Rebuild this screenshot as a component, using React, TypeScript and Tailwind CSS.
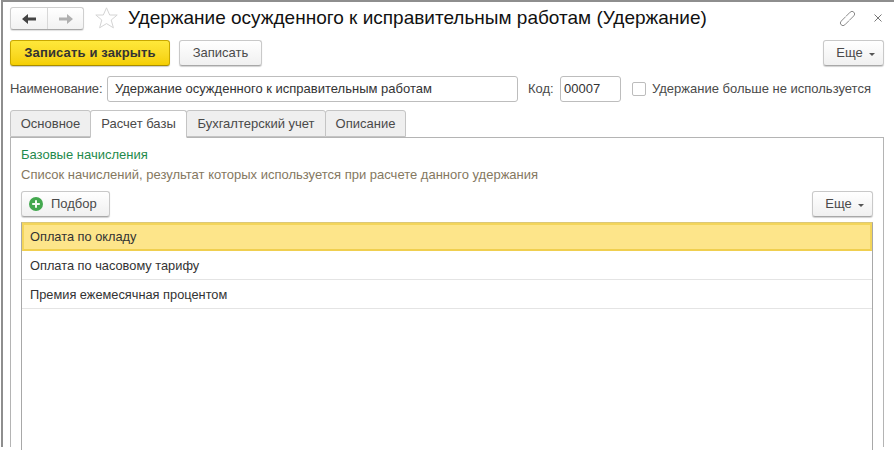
import React from "react";

const font = { fontFamily: '"Liberation Sans", Arial, sans-serif' };

function Btn({ children, className = "" }: { children: React.ReactNode; className?: string }) {
  return (
    <div
      className={`flex items-center justify-center h-[26px] rounded-[3px] border border-[#c9c9c9] border-b-[#a8a8a8] bg-gradient-to-b from-[#ffffff] to-[#f0f0f0] shadow-[0_1px_1px_rgba(0,0,0,0.18)] text-[13px] text-[#4a4a4a] ${className}`}
    >
      {children}
    </div>
  );
}

function More({ className = "" }: { className?: string }) {
  return (
    <Btn className={`w-[61px] gap-[6px] pl-[4px] ${className}`}>
      <span>Еще</span>
      <svg width="6" height="3" viewBox="0 0 6 3" className="mt-[2px]">
        <path d="M0 0H6L3 3Z" fill="#555" />
      </svg>
    </Btn>
  );
}

function Tab({ label, active, w }: { label: string; active?: boolean; w: string }) {
  return (
    <div
      className={`${w} flex items-center justify-center rounded-t-[3px] border border-[#c4c4c4] text-[13px] text-[#4a4a4a] -mr-px ${
        active ? "h-[28px] bg-white border-b-white relative z-10 -mb-px" : "h-[27px] bg-[#efefef]"
      }`}
    >
      {label}
    </div>
  );
}

export default function App() {
  return (
    <div className="w-[894px] h-[450px] bg-white overflow-hidden" style={font}>
      <div className="ml-px h-[447px] border-l-2 border-t-2 border-[#8e8e8e] pl-[7px] pt-[4px] pr-[10px]">
        {/* title row */}
        <div className="flex items-center h-[24px]">
          <div className="flex w-[74px] h-[23px] self-end rounded-[3px] border border-[#cfcfcf] border-b-[#a8a8a8] bg-gradient-to-b from-white to-[#f2f2f2] shadow-[0_1px_1px_rgba(0,0,0,0.12)]">
            <div className="w-[37px] flex items-center justify-center border-r border-[#d8d8d8]">
              <svg width="14" height="10" viewBox="0 0 14 10">
                <path d="M0 5L6 0V3.5H14V6.5H6V10Z" fill="#444" />
              </svg>
            </div>
            <div className="flex-1 flex items-center justify-center">
              <svg width="14" height="10" viewBox="0 0 14 10">
                <path d="M14 5L8 0V3.5H0V6.5H8V10Z" fill="#b0b0b0" />
              </svg>
            </div>
          </div>
          <svg width="23" height="22" viewBox="0 0 23 22" className="ml-[11px] mr-[1px]">
            <path
              d="M11.5 0.8L14.7 8H22.2L16.2 13L18.4 20.8L11.5 16.6L4.6 20.8L6.8 13L0.8 8H8.3Z"
              fill="none"
              stroke="#d4d4d4"
              strokeWidth="1"
            />
          </svg>
          <div className="ml-[9px] text-[19px] leading-[24px] text-[#111] whitespace-nowrap">
            Удержание осужденного к исправительным работам (Удержание)
          </div>
          <div className="ml-auto flex items-center">
            <svg width="17" height="17" viewBox="0 0 17 17" fill="none" stroke="#8a8a8a" strokeWidth="1" strokeLinecap="round">
              <path d="M10.84 9.84L14.84 5.84A2.6 2.6 0 0 0 11.16 2.16L7.16 6.16" />
              <path d="M6.16 7.16L2.16 11.16A2.6 2.6 0 0 0 5.84 14.84L9.84 10.84" />
            </svg>
            <svg width="8" height="8" viewBox="0 0 8 8" className="ml-[18px] mr-[2px]">
              <path d="M0.5 0.5L7.5 7.5M7.5 0.5L0.5 7.5" stroke="#777" strokeWidth="1" />
            </svg>
          </div>
        </div>

        {/* command bar */}
        <div className="flex items-center mt-[10px]">
          <div className="flex items-center justify-center w-[160px] h-[26px] rounded-[3px] border border-[#c9a800] border-b-[#a88c00] bg-gradient-to-b from-[#ffe83a] to-[#f5cf00] shadow-[0_1px_1px_rgba(0,0,0,0.2)] text-[13px] font-bold tracking-[0.15px] text-[#333]">
            Записать и закрыть
          </div>
          <Btn className="w-[83px] ml-[9px]">Записать</Btn>
          <More className="ml-auto" />
        </div>

        {/* name row */}
        <div className="flex items-center mt-[10px] h-[26px] text-[13px] text-[#4a4a4a]">
          <span className="whitespace-nowrap w-[97px] tracking-[-0.1px]">Наименование:</span>
          <div className="w-[411px] h-[26px] rounded-[3px] border border-[#bdbdbd] flex items-center pl-[7px] text-[#333] whitespace-nowrap">
            Удержание осужденного к исправительным работам
          </div>
          <span className="ml-[10px] w-[32px]">Код:</span>
          <div className="w-[61px] h-[26px] rounded-[3px] border border-[#bdbdbd] flex items-center pl-[3px] text-[#333]">
            00007
          </div>
          <div className="ml-[11px] w-[14px] h-[14px] rounded-[2px] border border-[#bcbcbc] bg-white" />
          <span className="ml-[6px] whitespace-nowrap">Удержание больше не используется</span>
        </div>

        {/* tabs */}
        <div className="flex mt-[8px] items-start">
          <Tab label="Основное" w="w-[81px]" />
          <Tab label="Расчет базы" w="w-[97px]" active />
          <Tab label="Бухгалтерский учет" w="w-[140px]" />
          <Tab label="Описание" w="w-[81px]" />
        </div>

        {/* panel */}
        <div className="h-[310px] border border-b-0 border-[#b4b4b4] px-[10px]">
          <div className="mt-[9px] text-[13px] leading-[15px] text-[#1f8a4c]">Базовые начисления</div>
          <div className="mt-[5px] text-[13px] leading-[15px] text-[#85785f] whitespace-nowrap">
            Список начислений, результат которых используется при расчете данного удержания
          </div>
          <div className="flex justify-between mt-[9px]">
            <Btn className="w-[89px] gap-[8px] !justify-start pl-[7px]">
              <svg width="14" height="14" viewBox="0 0 14 14">
                <circle cx="7" cy="7" r="7" fill="#43a84f" />
                <path d="M7 3.2V10.8M3.2 7H10.8" stroke="#f4fbf4" strokeWidth="2" />
              </svg>
              <span>Подбор</span>
            </Btn>
            <More />
          </div>
          <div className="mt-[5px] h-[231px] border border-b-0 border-[#a8a8a8] border-t-[#dcc878] text-[12.8px] text-[#333]">
            <div className="h-[28px] flex items-center pl-[6px] pb-[1px] bg-[#fde58a] border-2 border-[#f3d55b] border-b-[#f0cf4f]">
              Оплата по окладу
            </div>
            <div className="h-[29px] flex items-center pl-[8px] pt-[1px] border-b border-[#e4e4e4]">Оплата по часовому тарифу</div>
            <div className="h-[29px] flex items-center pl-[8px] pt-[1px] border-b border-[#e4e4e4]">Премия ежемесячная процентом</div>
          </div>
        </div>
      </div>
    </div>
  );
}
